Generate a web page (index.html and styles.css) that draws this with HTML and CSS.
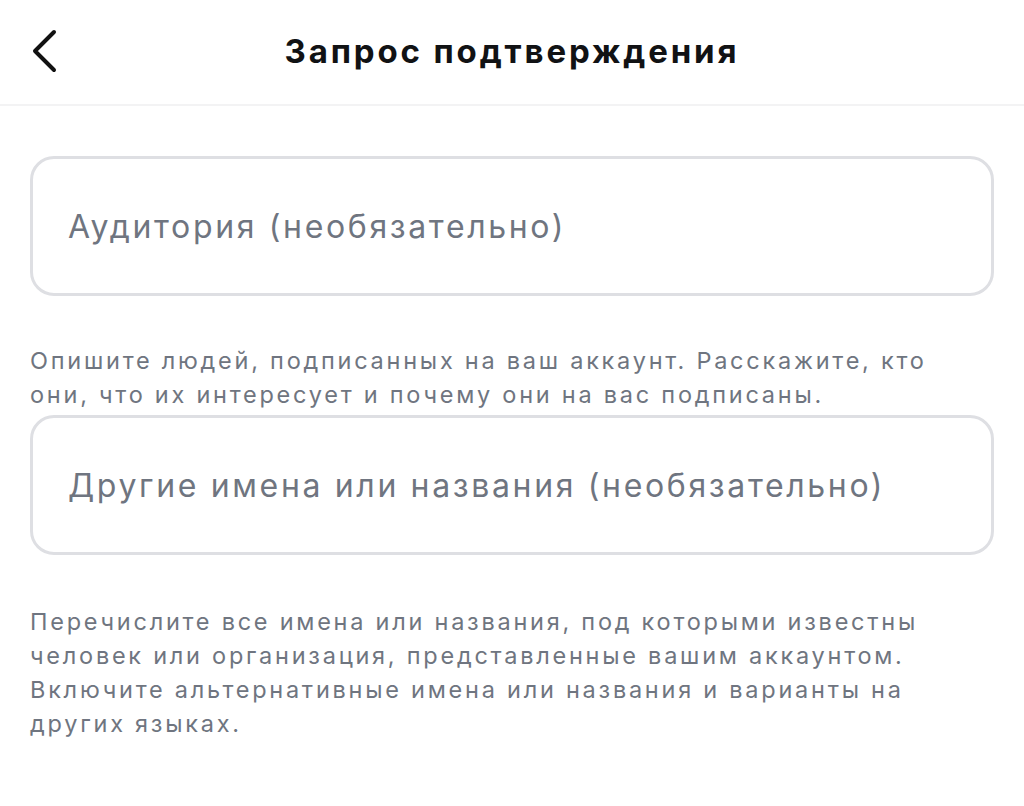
FILE: index.html
```html
<!DOCTYPE html>
<html lang="ru">
<head>
<meta charset="utf-8">
<link rel="stylesheet" href="styles.css">
</head>
<body>
<header class="topbar">
  <button class="back" aria-label="Назад">
    <svg width="28" height="44" viewBox="0 0 28 44"><path d="M24 3 L5 22 L24 41" fill="none" stroke="#111" stroke-width="4" stroke-linecap="round" stroke-linejoin="round"/></svg>
  </button>
  <h1 class="title">Запрос подтверждения</h1>
</header>
<main class="content">
  <div class="field"><span class="placeholder">Аудитория (необязательно)</span></div>
  <p class="hint hint-first">Опишите людей, подписанных на ваш аккаунт. Расскажите, кто они, что их интересует и почему они на вас подписаны.</p>
  <div class="field"><span class="placeholder">Другие имена или названия (необязательно)</span></div>
  <p class="hint hint-second">Перечислите все имена или названия, под которыми известны человек или организация, представленные вашим аккаунтом. Включите альтернативные имена или названия и варианты на других языках.</p>
</main>
</body>
</html>
```
FILE: styles.css
```css
html, body {
  margin: 0;
  padding: 0;
  background: #ffffff;
  font-family: Inter, "Noto Sans", sans-serif;
}
.topbar {
  position: relative;
  height: 104px;
  border-bottom: 2px solid #f3f3f4;
  display: flex;
  align-items: center;
  justify-content: center;
}
.back {
  position: absolute;
  left: 30px;
  top: 29px;
  padding: 0;
  border: 0;
  background: none;
  display: flex;
}
.title {
  margin: 0 0 2px;
  font-size: 33px;
  font-weight: 700;
  color: #111214;
  letter-spacing: 2.85px;
}
.content {
  padding: 50px 30px 0;
  display: flex;
  flex-direction: column;
}
.field {
  box-sizing: border-box;
  height: 140px;
  border: 3px solid #dedfe3;
  border-radius: 24px;
  display: flex;
  align-items: center;
  padding-left: 35px;
}
.placeholder {
  font-size: 32px;
  color: #6f7580;
  letter-spacing: 2.65px;
}
.hint {
  margin: 0;
  font-size: 23.5px;
  line-height: 34px;
  color: #6f7580;
  letter-spacing: 2.75px;
  padding-right: 60px;
}
.hint-first {
  margin-top: 48px;
  margin-bottom: 3px;
}
.hint-second {
  margin-top: 50px;
}
```
